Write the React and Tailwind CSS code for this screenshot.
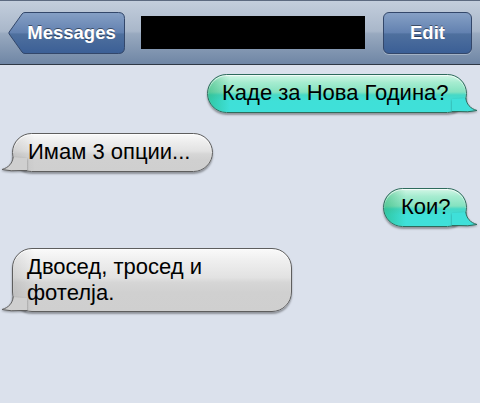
import React from "react";

function Tail({ side, fill, stroke }) {
  const pos = side === "right" ? "right-[-12px]" : "left-[-12px] -scale-x-100";
  return (
    <svg
      className={`absolute bottom-0 ${pos} w-[30px] h-[22px] overflow-visible drop-shadow-[0_1px_1px_rgba(0,0,0,0.35)]`}
      viewBox="0 0 30 22"
    >
      <path
        d="M4 21.5 L4 9 L17.8 8 C18.5 14 22 18.5 29 20.5 Q20 22.5 10 21.5 Z"
        fill={fill}
      />
      <path
        d="M17.8 8 C18.5 14 22 18.5 29 20.5 Q20 22.5 10 21.5 L4 21.5"
        fill="none"
        stroke={stroke}
        strokeWidth="1"
      />
    </svg>
  );
}

function Bubble({ side, children, className }) {
  const green = side === "right";
  return (
    <div
      className={`relative rounded-[20px] border ${
        green
          ? "border-[#2e6b5c] bg-[linear-gradient(to_right,rgba(30,170,100,0.45)_0px,rgba(30,170,100,0)_22px),linear-gradient(to_bottom,#d2f6e6_0%,#a6ecd0_20%,#84e2c0_46%,#46d8c6_54%,#3fe0d8_70%,#3fe0d9_100%)]"
          : "border-[#5e5e5e] bg-[linear-gradient(to_right,rgba(0,0,0,0.08)_0px,rgba(0,0,0,0)_22px),linear-gradient(to_bottom,#fafafa_0%,#eeeeee_20%,#e2e2e2_46%,#d6d6d6_54%,#d0d0d0_70%,#cfcfcf_100%)]"
      } shadow-[0_2px_2px_rgba(0,0,0,0.35),inset_0_1px_1px_rgba(255,255,255,0.8)] ${className}`}
    >
      <Tail
        side={side}
        fill={green ? "#3fe0d9" : "#cfcfcf"}
        stroke={green ? "#2e6b5c" : "#5e5e5e"}
      />
      <div className="relative text-[22px] leading-[26px] text-black">{children}</div>
    </div>
  );
}

export default function App() {
  return (
    <div className="w-[480px] h-[403px] bg-[#dbe1ec] font-['Liberation_Sans',Arial,sans-serif] overflow-hidden">
      <div className="h-[65px] flex items-center pl-2 border-t border-[#5c6a80] border-b border-b-[#2e3845] bg-[linear-gradient(to_bottom,#c3cedc_0%,#a9b7ca_48%,#98a9bf_52%,#6f86a5_100%)]">
        <div className="relative w-[117px] h-[42px] flex items-center justify-center pl-[10px]">
          <svg className="absolute inset-0" width="117" height="42" viewBox="0 0 117 42">
            <defs>
              <linearGradient id="bb" x1="0" y1="0" x2="0" y2="1">
                <stop offset="0" stopColor="#86a0c5" />
                <stop offset="0.5" stopColor="#6281b0" />
                <stop offset="0.52" stopColor="#4f709e" />
                <stop offset="1" stopColor="#3b5f96" />
              </linearGradient>
            </defs>
            <path
              d="M17 0.5 H110.5 Q116.5 0.5 116.5 6.5 V35.5 Q116.5 41.5 110.5 41.5 H17 Q15 41.5 14 40 L1.2 22 Q0.5 21 1.2 20 L14 2 Q15 0.5 17 0.5 Z"
              fill="url(#bb)"
              stroke="#33476a"
            />
          </svg>
          <span className="relative text-white font-bold text-[18.5px] [text-shadow:0_-1px_0_rgba(0,0,0,0.45)]">
            Messages
          </span>
        </div>
        <div className="ml-4 w-[224px] h-[33px] bg-black" />
        <div className="ml-[18px] w-[89px] h-[42px] rounded-[6px] border border-[#33476a] flex items-center justify-center bg-[linear-gradient(to_bottom,#86a0c5_0%,#6281b0_50%,#4f709e_52%,#3b5f96_100%)] shadow-[0_1px_0_rgba(255,255,255,0.3)]">
          <span className="text-white font-bold text-[18.5px] [text-shadow:0_-1px_0_rgba(0,0,0,0.45)]">
            Edit
          </span>
        </div>
      </div>

      <div className="flex flex-col">
        <Bubble side="right" className="self-end mr-[13px] mt-[9px] w-[260px] h-[39px] pl-[14px] pt-[5px]">
          Каде за Нова Година?
        </Bubble>
        <Bubble side="left" className="self-start ml-[12px] mt-[20px] w-[201px] h-[39px] pl-[15px] pt-[5px]">
          Имам 3 опции...
        </Bubble>
        <Bubble side="right" className="self-end mr-[13px] mt-[16px] w-[84px] h-[39px] pl-[17px] pt-[5px]">
          Кои?
        </Bubble>
        <Bubble side="left" className="self-start ml-[12px] mt-[21px] w-[280px] h-[64px] pl-[14px] pt-[5px]">
          Двосед, тросед и
          <br />
          фотелја.
        </Bubble>
      </div>
    </div>
  );
}
